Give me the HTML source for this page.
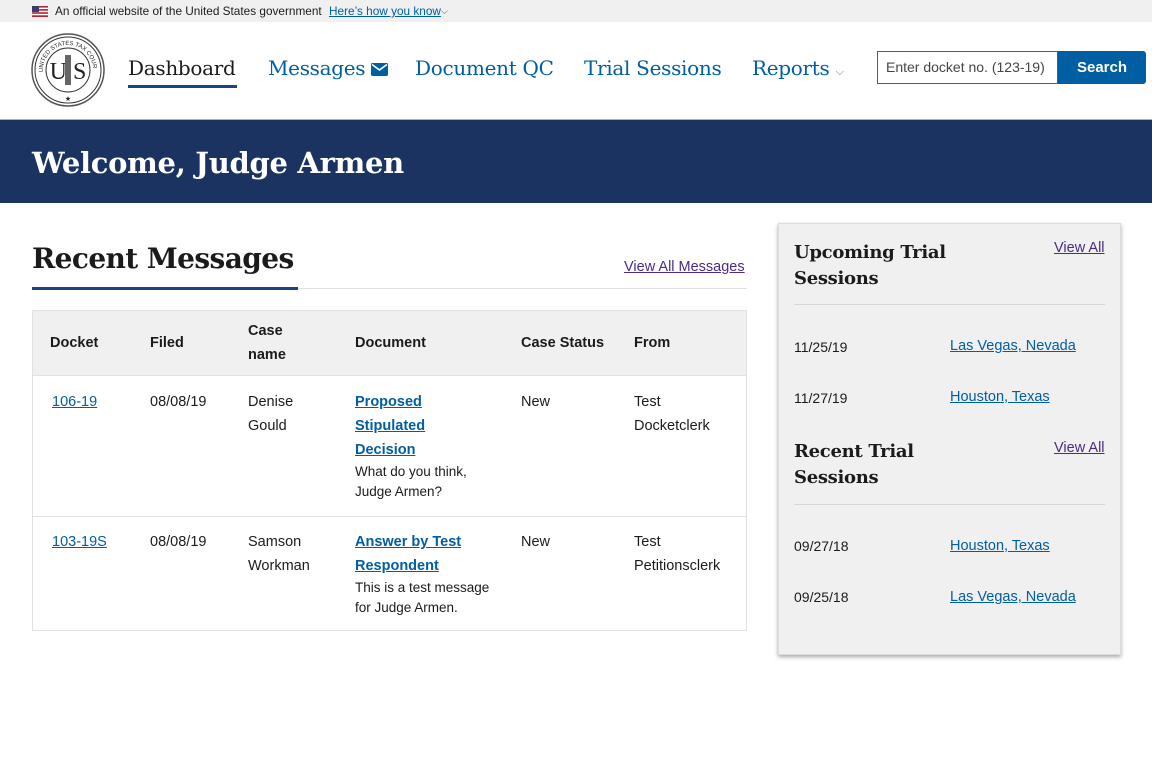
<!DOCTYPE html>
<html><head><meta charset="utf-8"><style>
*{box-sizing:border-box;margin:0;padding:0}
body{width:1152px;height:765px;overflow:hidden;background:#fff;font-family:"Liberation Sans",sans-serif;color:#1b1b1b;position:relative}
.abs{position:absolute}
.serif{font-family:"DejaVu Serif","Liberation Serif",serif;font-weight:bold}
a{color:#005ea2;text-decoration:underline}
.gov{top:0;left:0;width:1152px;height:22px;background:#f0f0f0;font-size:11.8px;line-height:22px}
.hdr{top:22px;left:0;width:1152px;height:98px;border-bottom:1px solid #aeb0b5}
.nav{font-size:20px;color:#005ea2;top:33px;font-family:"DejaVu Serif",serif;letter-spacing:-0.3px;line-height:26px}
.hero{top:120px;left:0;width:1152px;height:83px;background:#1b3360;color:#fff}
.sm{font-size:13.5px;line-height:20px}
.card{left:778px;top:223px;width:343px;height:432px;background:#f0f0f0;box-shadow:0 2px 4px rgba(0,0,0,.35);border:1px solid #dcdcdc}
.t{font-size:14.5px;line-height:24px}
</style></head><body>
<div class="abs gov">
 <svg class="abs" style="left:32px;top:6px" width="16" height="11" viewBox="0 0 16 11"><rect width="16" height="11" fill="#b22234"/><rect y="1.6" width="16" height="1.5" fill="#fff"/><rect y="4.7" width="16" height="1.5" fill="#fff"/><rect y="7.8" width="16" height="1.5" fill="#fff"/><rect width="7" height="6" fill="#3c3b6e"/></svg>
 <span class="abs" style="left:55px">An official website of the United States government</span>
 <a class="abs" style="left:329px">Here’s how you know</a><span class="abs" style="left:441px;color:#005ea2;font-size:9px">⌵</span>
</div>
<div class="abs hdr">
 <svg class="abs" style="left:31px;top:11px" width="74" height="74" viewBox="0 0 74 74"><circle cx="37" cy="37" r="36" fill="#fff" stroke="#555" stroke-width="1.5"/><circle cx="37" cy="37" r="33" fill="none" stroke="#333" stroke-width="1"/><circle cx="37" cy="37" r="22" fill="none" stroke="#333" stroke-width="1"/><path id="arc" d="M12 37 A25 25 0 0 1 62 37" fill="none"/><text font-family="Liberation Sans" font-size="6" fill="#222"><textPath href="#arc" startOffset="50%" text-anchor="middle">UNITED STATES TAX COURT</textPath></text><text x="37" y="46" font-family="Liberation Serif" font-size="24" text-anchor="middle" fill="#222">U S</text><rect x="34" y="22" width="6" height="30" fill="#666"/><text x="37" y="68" font-size="7" text-anchor="middle" fill="#222">★</text></svg>
 <div class="abs nav" style="left:128px;color:#1b1b1b">Dashboard</div>
 <div class="abs" style="left:128px;top:63px;width:109px;height:3px;background:#1a4480"></div>
 <div class="abs nav" style="left:268px">Messages <svg width="17" height="13" viewBox="0 0 17 13" style="vertical-align:-1px"><rect width="17" height="13" rx="1.5" fill="#005ea2"/><path d="M1 1.5L8.5 7 16 1.5" stroke="#fff" stroke-width="1.6" fill="none"/></svg></div>
 <div class="abs nav" style="left:415px">Document QC</div>
 <div class="abs nav" style="left:584px">Trial Sessions</div>
 <div class="abs nav" style="left:752px">Reports <span style="font-size:11px;color:#71767a;font-family:'Liberation Sans'">⌵</span></div>
 <div class="abs" style="left:877px;top:29px;width:181px;height:33px;border:1px solid #565c65;font-size:14px;line-height:31px;padding-left:8px;color:#454545">Enter docket no. (123-19)</div>
 <div class="abs" style="left:1058px;top:29px;width:88px;height:33px;background:#005ea2;border-radius:0 3px 3px 0;color:#fff;font-weight:bold;font-size:15px;line-height:33px;text-align:center">Search</div>
</div>
<div class="abs hero"><div class="abs serif" style="left:32px;top:26px;font-size:29px;letter-spacing:-0.3px">Welcome, Judge Armen</div></div>

<div class="abs serif" style="left:32px;top:242px;font-size:28px;letter-spacing:-0.6px">Recent Messages</div>
<a class="abs" style="left:624px;top:259px;font-size:14.5px;color:#4a2a8a">View All Messages</a>
<div class="abs" style="left:32px;top:288px;width:715px;height:1px;background:#dfe1e2"></div>
<div class="abs" style="left:32px;top:287px;width:266px;height:3px;background:#1a4480"></div>

<div class="abs" style="left:32px;top:310px;width:715px;height:321px;border:1px solid #dfe1e2">
 <div class="abs" style="left:0;top:0;width:713px;height:65px;background:#f0f0f0;border-bottom:1px solid #dfe1e2"></div>
 <div class="abs" style="left:0;top:205px;width:713px;height:1px;background:#dfe1e2"></div>
 <div class="abs t" style="font-weight:bold;top:8px;left:0;width:713px;height:50px">
  <span class="abs" style="left:17px;top:12px">Docket</span>
  <span class="abs" style="left:117px;top:12px">Filed</span>
  <span class="abs" style="left:215px;top:0">Case<br>name</span>
  <span class="abs" style="left:322px;top:12px">Document</span>
  <span class="abs" style="left:488px;top:12px">Case Status</span>
  <span class="abs" style="left:601px;top:12px">From</span>
 </div>
 <div class="abs t" style="top:79px;left:0;width:713px">
  <a class="abs" style="left:19px">106-19</a>
  <span class="abs" style="left:117px">08/08/19</span>
  <span class="abs" style="left:215px">Denise<br>Gould</span>
  <div class="abs" style="left:322px;width:150px"><a style="font-weight:bold">Proposed<br>Stipulated<br>Decision</a><div class="sm">What do you think,<br>Judge Armen?</div></div>
  <span class="abs" style="left:488px">New</span>
  <span class="abs" style="left:601px">Test<br>Docketclerk</span>
 </div>
 <div class="abs t" style="top:219px;left:0;width:713px">
  <a class="abs" style="left:19px">103-19S</a>
  <span class="abs" style="left:117px">08/08/19</span>
  <span class="abs" style="left:215px">Samson<br>Workman</span>
  <div class="abs" style="left:322px;width:150px"><a style="font-weight:bold">Answer by Test<br>Respondent</a><div class="sm">This is a test message<br>for Judge Armen.</div></div>
  <span class="abs" style="left:488px">New</span>
  <span class="abs" style="left:601px">Test<br>Petitionsclerk</span>
 </div>
</div>

<div class="abs card">
 <div class="abs serif" style="left:15px;top:16px;font-size:18px;line-height:26px;letter-spacing:-0.3px">Upcoming Trial<br>Sessions</div>
 <a class="abs" style="left:275px;top:16px;font-size:14.5px;color:#4a2a8a">View All</a>
 <div class="abs" style="left:15px;top:80px;width:311px;height:1px;background:#d6d7d9"></div>
 <span class="abs" style="left:15px;top:115px;font-size:14px">11/25/19</span><a class="abs" style="left:171px;top:114px;font-size:14.5px">Las Vegas, Nevada</a>
 <span class="abs" style="left:15px;top:166px;font-size:14px">11/27/19</span><a class="abs" style="left:171px;top:165px;font-size:14.5px">Houston, Texas</a>
 <div class="abs serif" style="left:15px;top:215px;font-size:18px;line-height:26px;letter-spacing:-0.3px">Recent Trial<br>Sessions</div>
 <a class="abs" style="left:275px;top:216px;font-size:14.5px;color:#4a2a8a">View All</a>
 <div class="abs" style="left:15px;top:280px;width:311px;height:1px;background:#d6d7d9"></div>
 <span class="abs" style="left:15px;top:314px;font-size:14px">09/27/18</span><a class="abs" style="left:171px;top:314px;font-size:14.5px">Houston, Texas</a>
 <span class="abs" style="left:15px;top:365px;font-size:14px">09/25/18</span><a class="abs" style="left:171px;top:365px;font-size:14.5px">Las Vegas, Nevada</a>
</div>
</body></html>
